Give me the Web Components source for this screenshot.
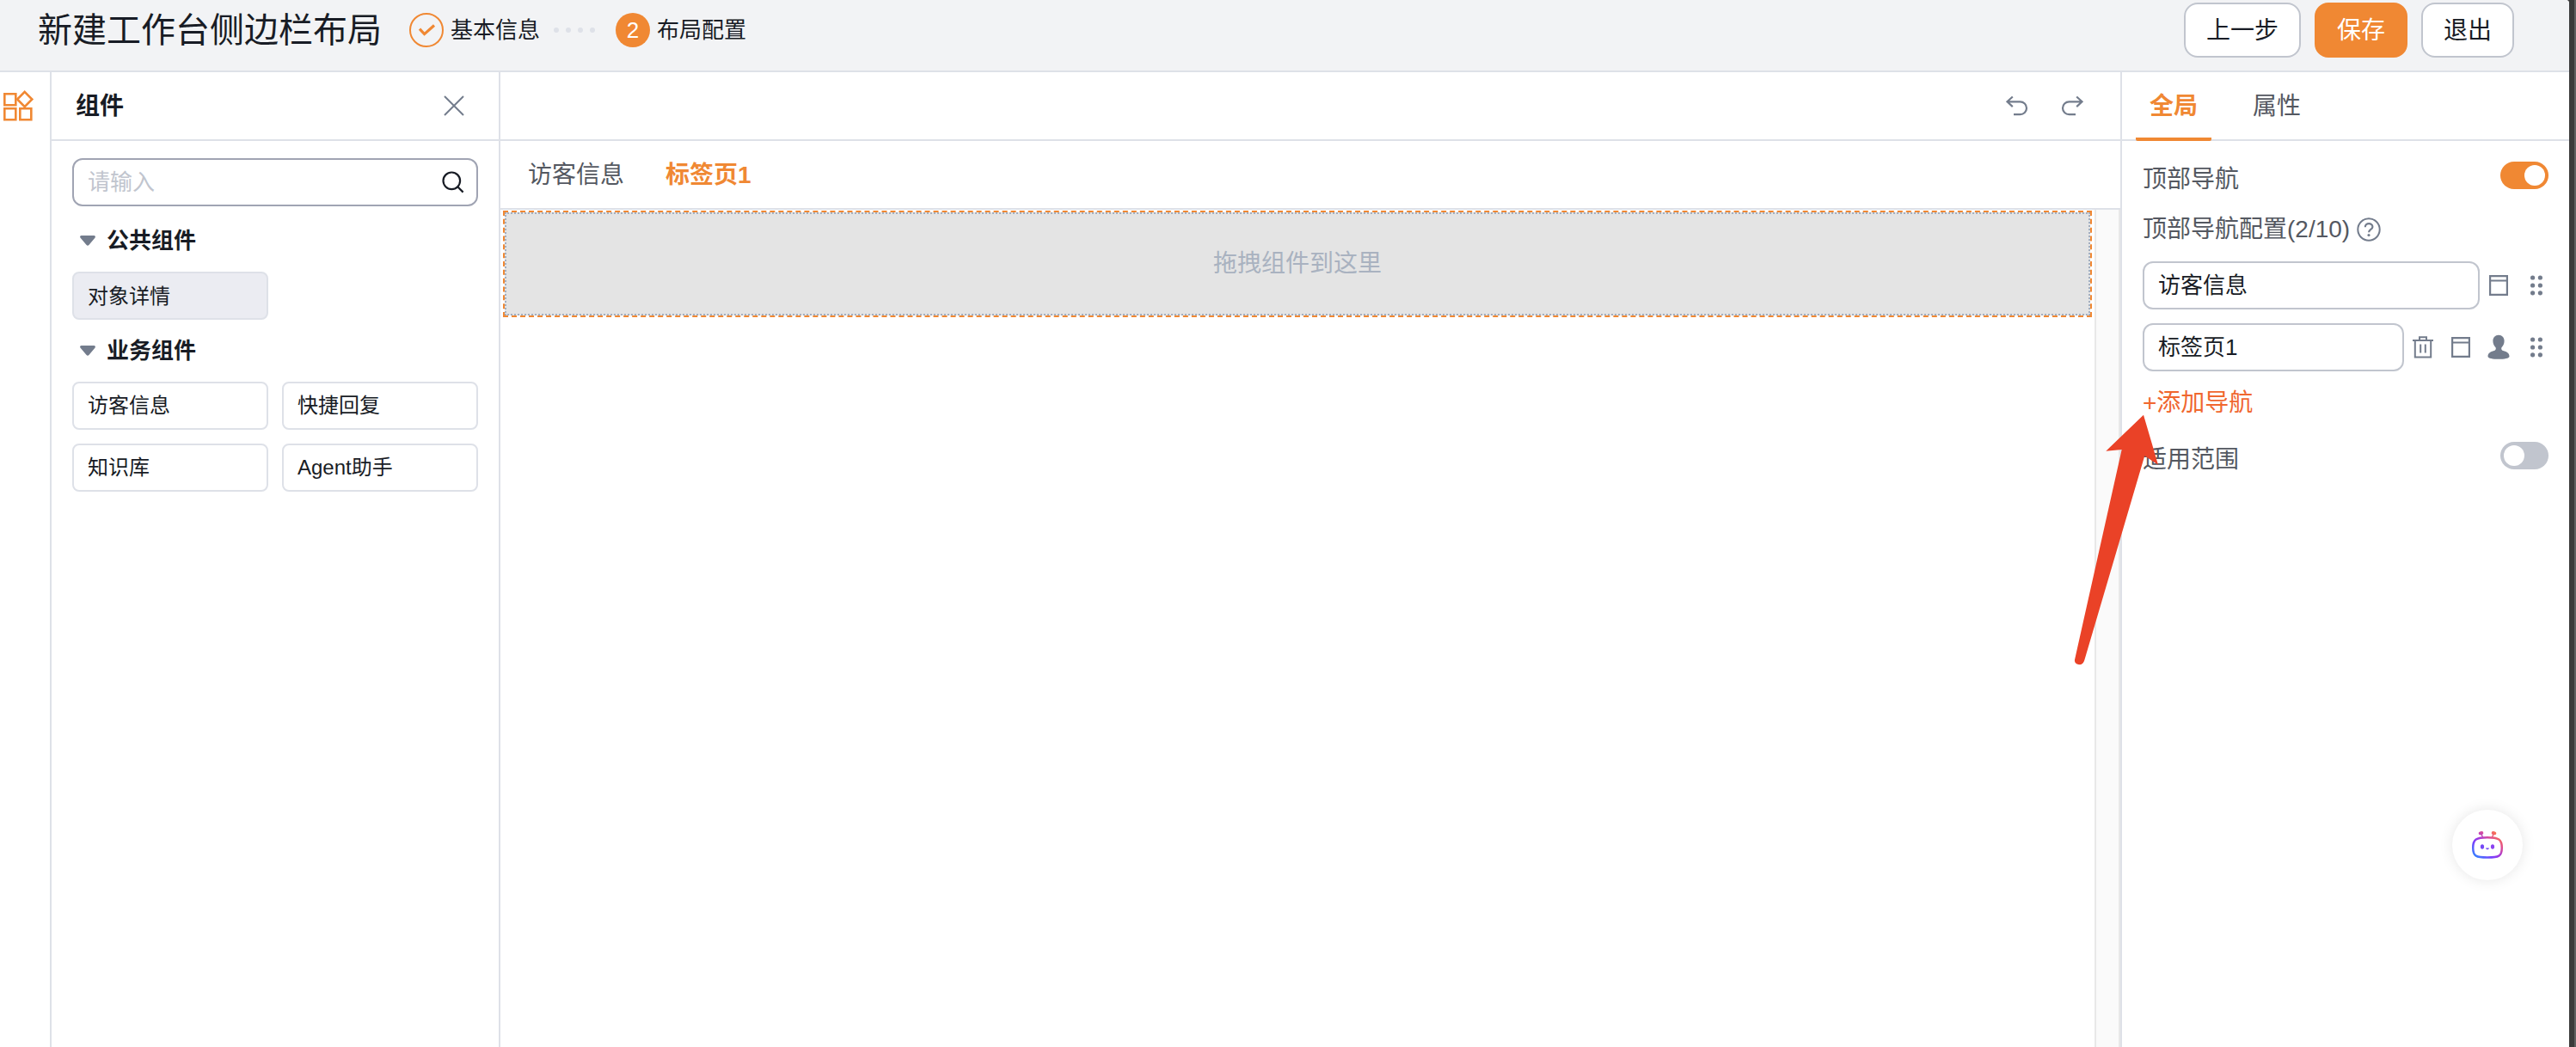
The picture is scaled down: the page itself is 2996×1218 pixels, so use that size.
<!DOCTYPE html>
<html lang="zh-CN">
<head>
  <meta charset="UTF-8">
  <title>新建工作台侧边栏布局</title>
  <style>
    body {
      margin: 0;
      font-family: "Liberation Sans", "Noto Sans CJK SC", sans-serif;
      color: #181c25;
      background: #fff;
    }
  </style>
</head>
<body>
  <layout-editor></layout-editor>

  <script>
    // base: every element clones its own template in an open shadow root
    class BaseElement extends HTMLElement {
      constructor() {
        super()
        this.attachShadow({ mode: 'open' })
      }
      connectedCallback() {
        const template = document.createElement('template')
        template.innerHTML = this.getStyles() + this.getTemplate()
        this.shadowRoot.replaceChildren(template.content.cloneNode(true))
      }
      getTemplate() { return '<slot></slot>' }
      getStyles() { return '' }
    }

    const ICONS = {
      apps: [36, 36, `<g fill="none" stroke="#f08833" stroke-width="2.6"><path d="M2.3 4.3h13v13h-13zM2.3 21.3h13v13h-13zM20.3 21.3h13v13h-13z"/><path d="M25.7 1.8l8.6 8.7-8.6 8.7-8.6-8.7z"/></g>`],
      close: [24, 24, `<path d="M1 1l22 22M23 1L1 23" fill="none" stroke="#737c8c" stroke-width="2"/>`],
      search: [26, 26, `<g fill="none" stroke="#181c25" stroke-width="2.2"><circle cx="11.3" cy="11.3" r="9.8"/><path d="M18 18l6.6 6.6"/></g>`],
      caret: [18, 12, `<path d="M1.8 0h14.4c1.6 0 2.3 1.6 1.2 2.8l-7 8.2c-.8 1-2 1-2.8 0l-7-8.2C-.5 1.6.2 0 1.8 0z" fill="#737c8c"/>`],
      check: [40, 40, `<circle cx="20" cy="20" r="19" fill="none" stroke="#f08833" stroke-width="2"/><path d="M12 18.6l5.6 6L29 14.500" fill="none" stroke="#f08833" stroke-width="3.200"/>`],
      undo: [28, 24, `<path d="M8.800 1.500L2.500 7.300l6.300 5.800M2.500 7.300H17.500a7.500 7.400 0 0 1 0 14.800H10" fill="none" stroke="#737c8c" stroke-width="2.200"/>`],
      redo: [28, 24, `<path d="M19.200 1.500L25.500 7.300l-6.300 5.800M25.500 7.300H10.500a7.500 7.400 0 0 0 0 14.800H18" fill="none" stroke="#737c8c" stroke-width="2.200"/>`],
      help: [28, 28, `<circle cx="14" cy="14" r="12.700" fill="none" stroke="#737c8c" stroke-width="2"/><path d="M9.800 11.200c0-5.500 8.600-5.300 8.600-.3 0 3-4.300 3-4.300 6.300" fill="none" stroke="#737c8c" stroke-width="2.200"/><circle cx="14" cy="20.500" r="1.600" fill="#737c8c"/>`],
      panel: [22, 24, `<path d="M1.100 1.100h19.800v21.800H1.100zM1 6.500h20" fill="none" stroke="#737c8c" stroke-width="2.200"/>`],
      trash: [24, 26, `<path d="M0 5h24M8 4.500V1.200h8v3.300M2.800 5v19.500h18.400V5M9.200 9.500v10M14.800 9.500v10" fill="none" stroke="#737c8c" stroke-width="2"/>`],
      user: [26, 30, `<path d="M13 .8c4 0 6.600 3 6.600 7 0 3.200-1.400 5.700-3.200 7.400-.6 2 .1 3.400 2.600 4 4.500 1 6.500 3.300 6.500 6.300 0 2.600-6 3.300-12.500 3.300S.5 28.100.5 25.500c0-3 2-5.300 6.500-6.300 2.500-.6 3.200-2 2.600-4-1.800-1.700-3.200-4.200-3.200-7.400 0-4 2.600-7 6.600-7z" fill="#737c8c"/>`],
      drag: [14, 24, `<g fill="#737c8c"><circle cx="2.600" cy="3" r="2.600"/><circle cx="11.400" cy="3" r="2.600"/><circle cx="2.600" cy="12" r="2.600"/><circle cx="11.400" cy="12" r="2.600"/><circle cx="2.600" cy="20.800" r="2.600"/><circle cx="11.400" cy="20.800" r="2.600"/></g>`],
      robot: [38, 34, `<defs><linearGradient id="g" gradientUnits="userSpaceOnUse" x1="6" y1="34" x2="32" y2="3"><stop offset="0" stop-color="#2f8bff"/><stop offset=".35" stop-color="#7a3ffc"/><stop offset=".5" stop-color="#a03ae0"/><stop offset=".75" stop-color="#e05090"/><stop offset="1" stop-color="#ff7a45"/></linearGradient></defs><g fill="none" stroke="url(#g)"><path stroke-width="2.500" d="M19 8.200c13 0 16.800 2 16.800 12S32 31.500 19 31.500 2.200 30.200 2.200 20.200s3.800-12 16.800-12z"/><path stroke-width="1.500" d="M13.500 8l-1.700-4M24.500 8l1.700-4"/></g><g fill="url(#g)"><ellipse cx="11.500" cy="3.200" rx="2.800" ry="2" transform="rotate(-15 11.500 3.200)"/><ellipse cx="26.500" cy="3.200" rx="2.800" ry="2" transform="rotate(15 26.500 3.200)"/></g><g fill="#7448f5"><ellipse cx="13" cy="19" rx="2.100" ry="2.800"/><ellipse cx="25" cy="19" rx="2.100" ry="2.800" fill="#8a42f0"/><path d="M17 20.500h4c-.4 2.400-3.600 2.400-4 0z"/></g>`]
    }

    class UiIcon extends BaseElement {
      getTemplate() {
        const [w, h, body] = ICONS[this.getAttribute('name')]
        return `<svg width="${w}" height="${h}" viewBox="0 0 ${w} ${h}">${body}</svg>`
      }
      getStyles() {
        return `<style>
          :host { display: flex; flex: none; }
          svg { display: block; overflow: visible; }
        </style>`
      }
    }

    class UiButton extends BaseElement {
      getStyles() {
        return `<style>
          :host {
            display: flex; align-items: center; justify-content: center;
            box-sizing: border-box; height: 64px; padding: 2px 24px 0;
            border: 2px solid #c1c5ce; border-radius: 16px;
            background: #fff; font-size: 28px; line-height: 40px;
          }
          :host([primary]) { background: #f08833; border-color: #f08833; color: #fff; }
        </style>`
      }
    }

    class UiSwitch extends BaseElement {
      getTemplate() { return '<i></i>' }
      getStyles() {
        return `<style>
          :host {
            display: flex; box-sizing: border-box; width: 56px; height: 32px;
            padding: 4px; border-radius: 16px; background: #c1c5ce;
          }
          :host([on]) { background: #f08833; justify-content: flex-end; }
          i { width: 24px; height: 24px; border-radius: 50%; background: #fff; }
        </style>`
      }
    }

    class StepItem extends BaseElement {
      getTemplate() {
        const num = this.getAttribute('num')
        return `${num ? `<b>${num}</b>` : '<ui-icon name="check"></ui-icon>'}<span><slot></slot></span>`
      }
      getStyles() {
        return `<style>
          :host { display: flex; align-items: center; gap: 8px; font-size: 26px; line-height: 38px; }
          b {
            width: 40px; height: 40px; border-radius: 50%; background: #f08833;
            color: #fff; font-weight: 400; line-height: 40px; text-align: center;
          }
        </style>`
      }
    }

    class EditorHeader extends BaseElement {
      getTemplate() {
        return `
          <h1>新建工作台侧边栏布局</h1>
          <step-item>基本信息</step-item>
          <div class="dots"><i></i><i></i><i></i><i></i></div>
          <step-item num="2">布局配置</step-item>
          <nav>
            <ui-button>上一步</ui-button>
            <ui-button primary>保存</ui-button>
            <ui-button>退出</ui-button>
          </nav>`
      }
      getStyles() {
        return `<style>
          :host {
            display: flex; align-items: center; box-sizing: border-box;
            height: 84px; padding: 0 64px 12px 44px;
            border-bottom: 2px solid #dee1e8; background: #f2f3f5;
          }
          h1 { margin: 0 32px 0 0; font-size: 40px; font-weight: 400; line-height: 60px; }
          .dots { display: flex; gap: 8px; margin: 0 24px 0 16px; }
          .dots i { width: 6px; height: 6px; border-radius: 50%; background: #dee1e8; }
          nav { display: flex; gap: 16px; margin-left: auto; }
        </style>`
      }
    }

    class ComponentItem extends BaseElement {
      getStyles() {
        return `<style>
          :host {
            display: block; box-sizing: border-box; height: 56px; padding: 0 16px;
            border: 2px solid #dee1e8; border-radius: 8px;
            font-size: 24px; line-height: 52px;
          }
          :host([active]) { background: #ebecf2; line-height: 54px; }
        </style>`
      }
    }

    class ComponentGroup extends BaseElement {
      getTemplate() {
        return `
          <h3><ui-icon name="caret"></ui-icon>${this.getAttribute('label')}</h3>
          <div><slot></slot></div>`
      }
      getStyles() {
        return `<style>
          :host { display: block; }
          h3 {
            display: flex; align-items: center; gap: 13px; box-sizing: border-box; height: 76px;
            margin: 0; padding: 4px 9px 0; font-size: 26px; line-height: 38px;
          }
          div { display: grid; grid-template-columns: 1fr 1fr; gap: 16px; }
        </style>`
      }
    }

    class ComponentPanel extends BaseElement {
      getTemplate() {
        return `
          <header><span>组件</span><ui-icon name="close"></ui-icon></header>
          <main>
            <label>请输入<ui-icon name="search"></ui-icon></label>
            <component-group label="公共组件">
              <component-item active>对象详情</component-item>
            </component-group>
            <component-group label="业务组件" style="margin-top:-4px">
              <component-item>访客信息</component-item>
              <component-item>快捷回复</component-item>
              <component-item>知识库</component-item>
              <component-item>Agent助手</component-item>
            </component-group>
          </main>`
      }
      getStyles() {
        return `<style>
          :host { display: block; border-right: 2px solid #dee1e8; }
          header {
            display: flex; align-items: center; justify-content: space-between;
            box-sizing: border-box; height: 80px; padding: 0 40px 1px 28px;
            border-bottom: 2px solid #dee1e8;
            font-size: 28px; font-weight: 700; line-height: 40px;
          }
          header span { padding-top: 3px; }
          main { padding: 20px 24px; }
          label {
            display: flex; align-items: center; justify-content: space-between;
            box-sizing: border-box; height: 56px; padding: 0 14px 0 16px;
            border: 2px solid #a0a4b3; border-radius: 12px;
            color: #c1c5ce; font-size: 26px; line-height: 38px;
          }
        </style>`
      }
    }

    class DropZone extends BaseElement {
      getTemplate() { return '<div><slot></slot></div>' }
      getStyles() {
        return `<style>
          :host { display: block; box-sizing: border-box; height: 124px; border: 2px dashed #f08833; }
          div {
            box-sizing: border-box; height: 120px; border: 2px dotted #a3aebf;
            background: #e4e4e4; color: #a9b2c0;
            font-size: 28px; line-height: 116px; text-align: center;
          }
        </style>`
      }
    }

    class EditorCanvas extends BaseElement {
      getTemplate() {
        return `
          <header><ui-icon name="undo"></ui-icon><ui-icon name="redo"></ui-icon></header>
          <nav><span>访客信息</span><b>标签页1</b></nav>
          <main>
            <drop-zone>拖拽组件到这里</drop-zone>
            <aside></aside>
          </main>`
      }
      getStyles() {
        return `<style>
          :host { display: flex; flex-direction: column; }
          header {
            display: flex; align-items: center; justify-content: flex-end; gap: 36px;
            box-sizing: border-box; height: 80px; padding: 0 42px 0 0;
            border-bottom: 2px solid #dee1e8;
          }
          nav {
            display: flex; align-items: center; gap: 48px;
            box-sizing: border-box; height: 80px; padding: 1px 32px 0;
            border-bottom: 2px solid #dee1e8;
            font-size: 28px; line-height: 40px;
          }
          span { color: #545861; }
          b { color: #f08833; }
          main { display: flex; flex: 1; gap: 3px; }
          drop-zone { flex: 1; margin: 1px 0 0 3px; }
          aside {
            box-sizing: border-box; width: 30px; background: #fafafa;
            border: solid #e8e8e8; border-width: 0 2px;
          }
        </style>`
      }
    }

    class NavRow extends BaseElement {
      getTemplate() {
        const icons = this.getAttribute('icons').split(' ')
        return `<div><slot></slot></div>${icons.map(i => `<p><ui-icon name="${i}"></ui-icon></p>`).join('')}`
      }
      getStyles() {
        return `<style>
          :host { display: flex; height: 56px; }
          div {
            flex: 1; box-sizing: border-box; padding: 0 16px;
            border: 2px solid #c1c5ce; border-radius: 12px;
            font-size: 26px; line-height: 53px;
          }
          p { display: flex; align-items: center; justify-content: center; width: 44px; margin: 0; }
        </style>`
      }
    }

    class SettingsPanel extends BaseElement {
      getTemplate() {
        return `
          <header><b>全局</b><span>属性</span></header>
          <main>
            <div class="row">顶部导航<ui-switch on></ui-switch></div>
            <div class="title">顶部导航配置(2/10)<ui-icon name="help"></ui-icon></div>
            <nav-row icons="panel drag">访客信息</nav-row>
            <nav-row icons="trash panel user drag">标签页1</nav-row>
            <div class="add">+添加导航</div>
            <div class="row">适用范围<ui-switch></ui-switch></div>
          </main>`
      }
      getStyles() {
        return `<style>
          :host { display: block; border-left: 2px solid #dee1e8; color: #545861; font-size: 28px; line-height: 40px; }
          header {
            display: flex; gap: 32px; box-sizing: border-box; height: 80px;
            padding-left: 16px; border-bottom: 2px solid #dee1e8;
          }
          header b, header span { box-sizing: border-box; height: 80px; padding: 20px 16px 0; }
          header b { border-bottom: 4px solid #f08833; border-radius: 2px; color: #f08833; }
          main { padding: 20px 24px; }
          .row { display: flex; justify-content: space-between; height: 60px; padding-top: 5px; box-sizing: border-box; }
          .row ui-switch { margin-top: -1px; }
          .title { display: flex; align-items: center; gap: 8px; height: 44px; margin-bottom: 16px; padding-top: 1px; box-sizing: border-box; }
          nav-row { margin: 0 -8px 16px 0; color: #181c25; }
          .add { box-sizing: border-box; height: 62px; padding-top: 1px; color: #f0672f; }
        </style>`
      }
    }

    class LayoutEditor extends BaseElement {
      getTemplate() {
        return `
          <div class="page">
            <editor-header></editor-header>
            <section>
              <div class="rail"><ui-icon name="apps"></ui-icon></div>
              <component-panel></component-panel>
              <editor-canvas></editor-canvas>
              <settings-panel></settings-panel>
            </section>
          </div>
          <div class="edge"></div>
          <div class="bot"><ui-icon name="robot"></ui-icon></div>
          <svg class="arrow" width="100" height="292" viewBox="0 0 100 292">
            <path d="M80 .7L97 58.700 81.300 48.300 11.300 286C9.500 291 7 291.500 4.500 291 1.500 290.200-.5 288.500 0 285.500L54.700 41 36.300 42.700z" fill="#ea4227"/>
          </svg>`
      }
      getStyles() {
        return `<style>
          :host { display: flex; position: relative; width: 2996px; height: 1218px; overflow: hidden; background: #3b3b3b; }
          .page { display: flex; flex-direction: column; width: 2988px; overflow: hidden; border-top-right-radius: 4px; background: #fff; }
          section { display: grid; flex: 1; grid-template-columns: 60px 522px 1884px 522px; }
          .rail { padding: 21px 0 0 3px; border-right: 2px solid #dee1e8; }
          .edge { width: 2px; margin-left: 6px; background: #606060; }
          .bot {
            position: absolute; left: 2852px; top: 942px; width: 82px; height: 82px;
            display: flex; align-items: center; justify-content: center;
            border-radius: 50%; background: #fff; box-shadow: 0 0 16px rgba(0, 0, 0, .1);
          }
          .arrow { position: absolute; left: 2413px; top: 482px; overflow: visible; }
        </style>`
      }
    }

    customElements.define('ui-icon', UiIcon)
    customElements.define('ui-button', UiButton)
    customElements.define('ui-switch', UiSwitch)
    customElements.define('step-item', StepItem)
    customElements.define('editor-header', EditorHeader)
    customElements.define('component-item', ComponentItem)
    customElements.define('component-group', ComponentGroup)
    customElements.define('component-panel', ComponentPanel)
    customElements.define('drop-zone', DropZone)
    customElements.define('editor-canvas', EditorCanvas)
    customElements.define('nav-row', NavRow)
    customElements.define('settings-panel', SettingsPanel)
    customElements.define('layout-editor', LayoutEditor)
  </script>
</body>
</html>
